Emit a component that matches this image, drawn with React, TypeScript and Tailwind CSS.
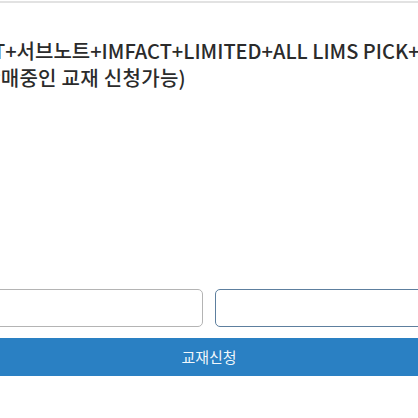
export default function App() {
  return (
    <div
      className="h-[418px] w-[418px] overflow-hidden bg-white"
      style={{ fontFamily: "'Noto Sans CJK KR', 'Noto Sans', sans-serif" }}
    >
      <div className="mt-[1px] h-[2px] bg-[#e2e2e2]" />

      {/* 안내 문구 (좌측 잘림) */}
      <div className="mt-[34px] text-[20px] leading-[27px] font-medium whitespace-nowrap text-[#2b2b2b]">
        <div className="-ml-[7px]">T+서브노트+IMFACT+LIMITED+ALL LIMS PICK+</div>
        <div className="-ml-[18px] tracking-[0.3px]">판매중인 교재 신청가능)</div>
      </div>

      {/* 입력 */}
      <div className="mt-[198px] -mx-[20px] grid grid-cols-2 gap-3">
        <input className="h-[38px] rounded-[5px] border border-[#b4b4b4] bg-white" />
        <input className="h-[38px] rounded-[5px] border border-[#5d7f9e] bg-white" />
      </div>

      <button className="mt-[11px] flex h-[38px] w-full items-center justify-center bg-[#2a80c3] text-[15px] text-white/95">
        교재신청
      </button>
    </div>
  );
}
